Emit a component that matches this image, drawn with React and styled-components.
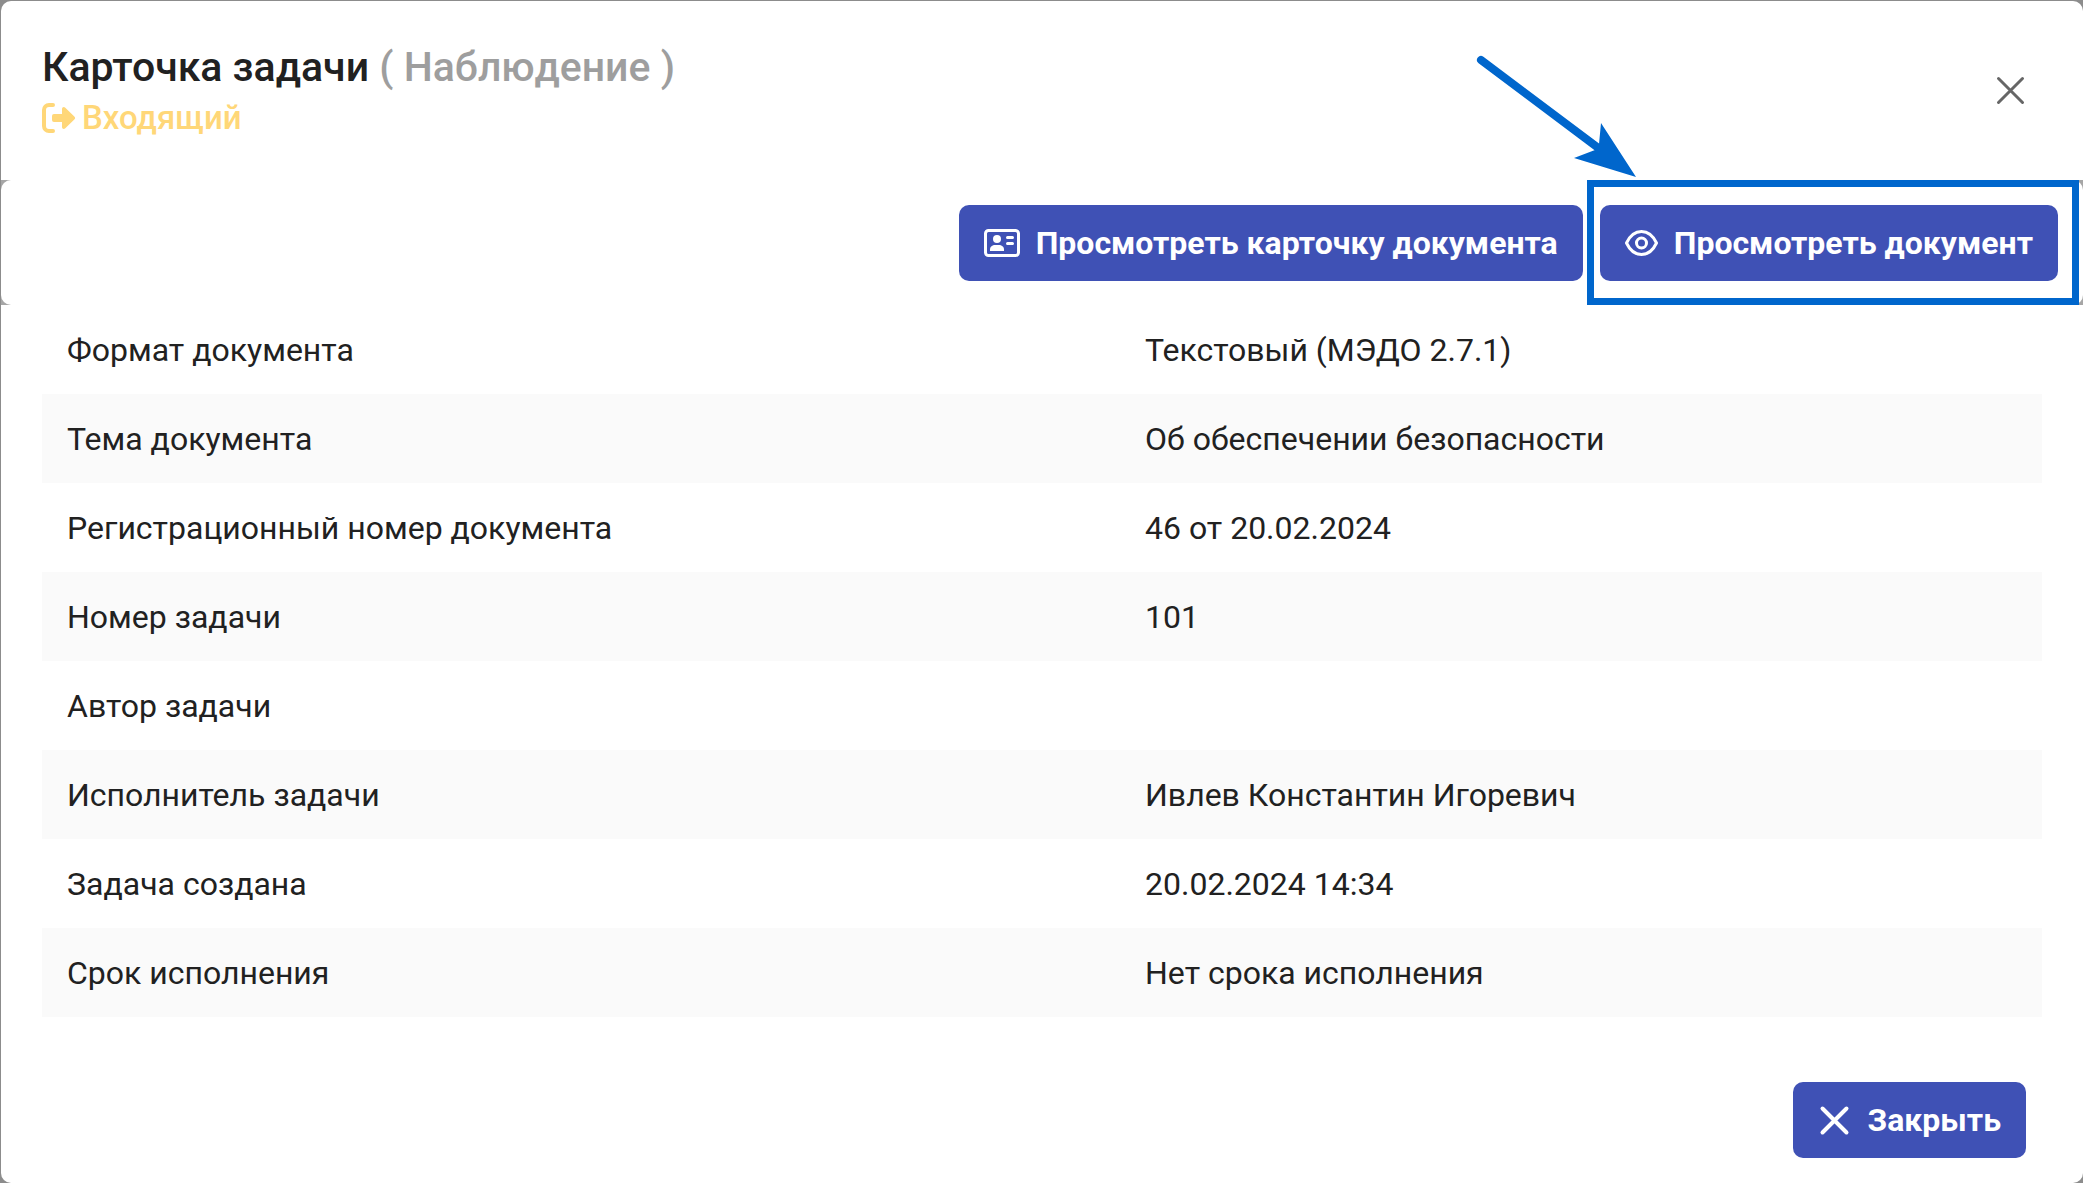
import React from "react";
import styled, { createGlobalStyle } from "styled-components";

const details = [
  { label: "Формат документа", value: "Текстовый (МЭДО 2.7.1)" },
  { label: "Тема документа", value: "Об обеспечении безопасности" },
  { label: "Регистрационный номер документа", value: "46 от 20.02.2024" },
  { label: "Номер задачи", value: "101" },
  { label: "Автор задачи", value: "" },
  { label: "Исполнитель задачи", value: "Ивлев Константин Игоревич" },
  { label: "Задача создана", value: "20.02.2024 14:34" },
  { label: "Срок исполнения", value: "Нет срока исполнения" },
];

const IncomingIcon = () => (
  <svg width="34" height="30" viewBox="0 0 34 30" fill="none" aria-hidden="true">
    <path
      d="M11 2H7a5 5 0 0 0-5 5v16a5 5 0 0 0 5 5h4"
      stroke="currentColor"
      strokeWidth="4"
      strokeLinecap="round"
    />
    <path
      d="M12 11h8V6c0-2 2-2.600 3.300-1.300l9 8.800a2 2 0 0 1 0 3l-9 8.800C22 26.600 20 26 20 24v-5h-8a2 2 0 0 1-2-2v-4a2 2 0 0 1 2-2z"
      fill="currentColor"
    />
  </svg>
);

const CardIcon = () => (
  <svg width="36" height="28" viewBox="0 0 36 28" aria-hidden="true">
    <rect x="1.500" y="1.500" width="33" height="25" rx="3" fill="none" stroke="currentColor" strokeWidth="3" />
    <circle cx="13" cy="10" r="4" fill="currentColor" />
    <path d="M6 22v-1.500C6 17.500 8.500 16 11 16h4c2.500 0 5 1.500 5 4.500V22z" fill="currentColor" />
    <path d="M23.500 8.500h5M23.500 14.500h5" stroke="currentColor" strokeWidth="3" strokeLinecap="round" />
  </svg>
);

const EyeIcon = () => (
  <svg width="33" height="28" viewBox="0 0 33 28" fill="none" stroke="currentColor" strokeWidth="3" aria-hidden="true">
    <path d="M1.500 14C5 6.500 10.500 2.500 16.500 2.500S28 6.500 31.500 14C28 21.500 22.500 25.500 16.500 25.500S5 21.500 1.500 14z" strokeLinejoin="round" />
    <circle cx="16.500" cy="14" r="5" />
  </svg>
);

const TimesIcon = ({ size = 33, weight = 3 }) => (
  <svg width={size} height={size} viewBox="0 0 33 33" fill="none" aria-hidden="true">
    <path d="M4.500 4.500l24 24M28.500 4.500l-24 24" stroke="currentColor" strokeWidth={weight} strokeLinecap="round" />
  </svg>
);

const App = () => {
  return (
    <>
      <GlobalStyle />
      <Dialog role="dialog" aria-labelledby="task-title">
        <Header>
          <div>
            <Title id="task-title">
              Карточка задачи <span>( Наблюдение )</span>
            </Title>
            <Direction>
              <IncomingIcon />
              Входящий
            </Direction>
          </div>
          <IconButton type="button" aria-label="Закрыть окно">
            <TimesIcon />
          </IconButton>
        </Header>

        <ToolbarBack>
          <Toolbar>
            <Button type="button">
              <CardIcon />
              Просмотреть карточку документа
            </Button>
            <Highlight>
              <Button type="button">
                <EyeIcon />
                Просмотреть документ
              </Button>
              <Frame />
              <Pointer width="160" height="128" viewBox="0 0 160 128" aria-hidden="true">
                <path d="M7 8l120 90" stroke="#0066cc" strokeWidth="8" strokeLinecap="round" />
                <path d="M162 125l-35-54-2 21-4 6-21 8z" fill="#0066cc" />
              </Pointer>
            </Highlight>
          </Toolbar>
        </ToolbarBack>

        <Content>
          <Details>
            <tbody>
              {details.map(({ label, value }) => (
                <tr key={label}>
                  <th scope="row">{label}</th>
                  <td>{value}</td>
                </tr>
              ))}
            </tbody>
          </Details>
        </Content>

        <Footer>
          <Button type="button">
            <TimesIcon weight={4} />
            Закрыть
          </Button>
        </Footer>
      </Dialog>
    </>
  );
};

const GlobalStyle = createGlobalStyle`
  * {
    box-sizing: border-box;
  }
  body {
    margin: 0;
    background: #8c8c8c;
    color: #212121;
    font-family: Roboto, "Liberation Sans", sans-serif;
    font-size: 32px;
  }
`;

const Dialog = styled.div`
  margin: 1px 0 0 1px;
  background: #ffffff;
  border-radius: 10px;
  overflow: hidden;
`;

const Header = styled.header`
  display: flex;
  align-items: flex-start;
  justify-content: space-between;
  height: 179px;
  padding: 41px 41px 0;
`;

const Title = styled.h1`
  margin: 0;
  font-size: 41px;
  font-weight: 500;
  line-height: 50px;
  span {
    color: #9e9e9e;
  }
`;

const Direction = styled.div`
  display: flex;
  align-items: center;
  gap: 6px;
  color: #ffd778;
  font-size: 33px;
  font-weight: 500;
  line-height: 52px;
`;

const IconButton = styled.button`
  display: flex;
  align-items: center;
  justify-content: center;
  width: 64px;
  height: 64px;
  margin-top: 16px;
  padding: 0;
  border: none;
  background: none;
  color: #666666;
  cursor: pointer;
`;

const ToolbarBack = styled.div`
  background: #a6a6a6;
`;

const Toolbar = styled.div`
  display: flex;
  justify-content: flex-end;
  gap: 17px;
  padding: 25px 25px 24px;
  background: #ffffff;
  border-radius: 10px;
`;

const Button = styled.button`
  display: flex;
  align-items: center;
  gap: 16px;
  height: 76px;
  padding: 0 25px;
  border: none;
  border-radius: 10px;
  background: #3f51b5;
  color: #ffffff;
  font: inherit;
  font-weight: 700;
  white-space: nowrap;
  cursor: pointer;
  &:hover {
    background: #394aa6;
  }
`;

const Highlight = styled.div`
  position: relative;
`;

const Frame = styled.div`
  position: absolute;
  inset: -25px -21px -24px -13px;
  border: 7px solid #0066cc;
  pointer-events: none;
`;

const Pointer = styled.svg`
  position: absolute;
  left: -126px;
  bottom: 101px;
  overflow: visible;
  fill: none;
  pointer-events: none;
`;

const Content = styled.main`
  padding: 0 41px;
`;

const Details = styled.table`
  width: 100%;
  table-layout: fixed;
  border-collapse: collapse;
  th,
  td {
    height: 89px;
    padding: 0 25px;
    font-weight: 400;
    text-align: left;
  }
  th {
    width: 53.9%;
  }
  tr:nth-child(even) {
    background: #fafafa;
  }
`;

const Footer = styled.footer`
  display: flex;
  justify-content: flex-end;
  padding: 65px 57px 25px;
`;

export default App;
